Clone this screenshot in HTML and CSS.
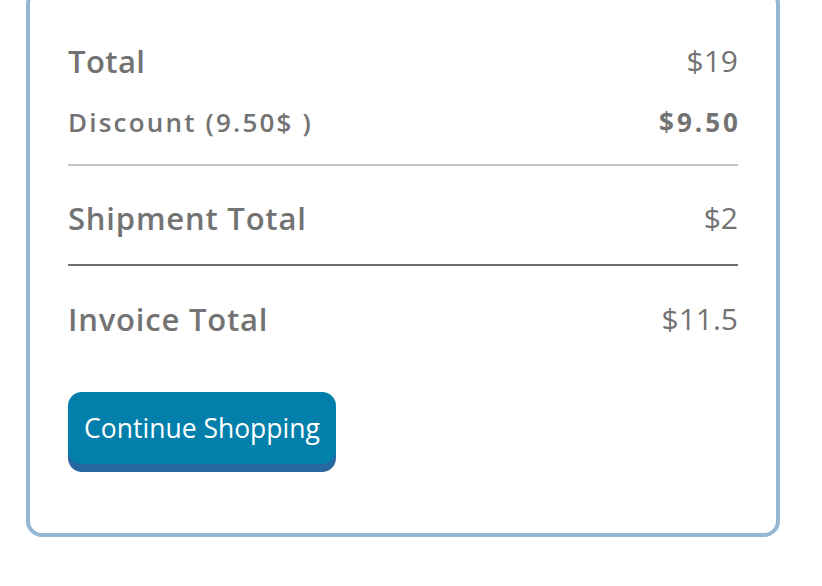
FILE: index.html
```html
<!DOCTYPE html>
<html lang="en">
<head>
<meta charset="UTF-8">
<meta name="viewport" content="width=device-width, initial-scale=1.0">
<title>Cart Summary</title>
<link rel="stylesheet" href="styles.css">
</head>
<body>
    <div class="summary">
        <div class="row row-total">
            <span class="label">Total</span>
            <span class="value">$19</span>
        </div>
        <div class="row row-discount">
            <span class="label">Discount (9.50$ )</span>
            <span class="value">$9.50</span>
        </div>
        <div class="divider light"></div>
        <div class="row row-shipment">
            <span class="label">Shipment Total</span>
            <span class="value">$2</span>
        </div>
        <div class="divider dark"></div>
        <div class="row row-invoice">
            <span class="label">Invoice Total</span>
            <span class="value">$11.5</span>
        </div>
        <button class="continue-btn">Continue Shopping</button>
    </div>
</body>
</html>
```
FILE: styles.css
```css
body {
    margin: 0;
    background: #ffffff;
    font-family: "Open Sans", "DejaVu Sans", sans-serif;
    color: #737373;
}
.summary {
    margin: -12px 42px 0 26px;
    border: 4px solid #95b7d3;
    border-radius: 16px;
    padding: 8px 38px 69px 38px;
}
.row {
    display: flex;
    justify-content: space-between;
    align-items: center;
    line-height: 40px;
}
.label {
    font-weight: 600;
    font-size: 31px;
    letter-spacing: 0.8px;
}
.value {
    font-size: 30px;
}
.row-total .label {
    letter-spacing: 0.4px;
}
.row-total {
    padding-top: 41px;
}
.row-discount {
    margin-top: 21px;
}
.row-discount .label,
.row-discount .value {
    font-size: 26px;
    font-weight: 600;
    letter-spacing: 2.2px;
}
.row-discount .value {
    font-weight: 700;
    letter-spacing: 3px;
    margin-right: -3px;
}
.row-shipment {
    margin-top: 32px;
}
.row-invoice {
    margin-top: 33px;
}
.divider {
    height: 2px;
}
.divider.light {
    margin-top: 22px;
    background: #c6c6c6;
}
.divider.dark {
    margin-top: 26px;
    background: #6f6f6f;
}
.continue-btn {
    display: block;
    margin-top: 53px;
    width: 268px;
    height: 72px;
    border: none;
    border-radius: 14px;
    background-color: #027fab;
    box-shadow: 0 8px 0 #2767a0;
    color: #ffffff;
    font-family: "Open Sans", "DejaVu Sans", sans-serif;
    font-size: 26.5px;
    padding: 0;
    cursor: pointer;
}
```
